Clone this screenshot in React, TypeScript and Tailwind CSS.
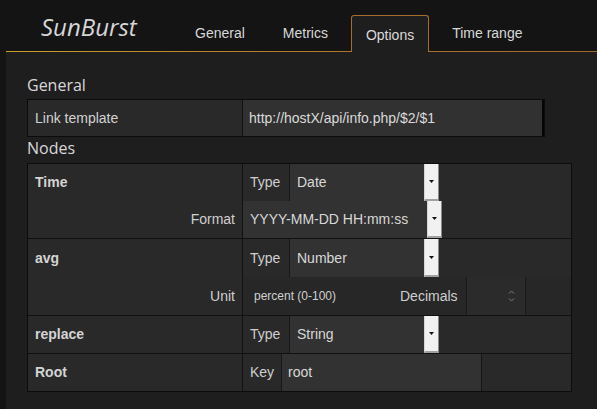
import React from 'react';

const sans = { fontFamily: '"Liberation Sans", Arial, sans-serif' };
const open = { fontFamily: '"Open Sans", "Noto Sans", sans-serif' };

const tabs = ['General', 'Metrics', 'Options', 'Time range'];

function Arrow() {
  return (
    <div className="w-[15px] h-full shrink-0 bg-[#f1f1f1] border-l border-l-[#d6d6d6] border-r border-r-[#8a8a8a] border-b-2 border-b-[#a0a0a0] flex items-center justify-center">
      <svg width="5" height="3" viewBox="0 0 5 3">
        <path d="M0 0h5L2.5 3z" fill="#111" />
      </svg>
    </div>
  );
}

function Select({ value, className }: { value: string; className: string }) {
  return (
    <div className={`h-full flex bg-[#323232] ${className}`}>
      <div className="flex-1 flex items-center pl-[7px] text-[#d8d8d8]">{value}</div>
      <Arrow />
    </div>
  );
}

function Label({ text, className }: { text: string; className: string }) {
  return (
    <div className={`h-full flex items-center pl-[7px] border-r border-[#181818] text-[#cfcfcf] ${className}`}>
      {text}
    </div>
  );
}

function NameCell({ name }: { name: string }) {
  return <div className="h-[37px] flex items-center pl-[7px] font-bold text-[#d4d4d4]">{name}</div>;
}

export default function App() {
  return (
    <div className="w-[597px] h-[409px] bg-[#141414] flex flex-col overflow-hidden text-[14px]" style={sans}>
      {/* header with title and tabs */}
      <header className="h-[51px] shrink-0 flex items-end pl-[41px]">
        <div className="w-[139px] h-full flex items-center pt-[3px] italic text-[24px] text-[#d6d6d6]" style={open}>
          SunBurst
        </div>
        <nav className="flex gap-[8px]">
          {tabs.map((t) =>
            t === 'Options' ? (
              <div
                key={t}
                className="relative z-10 -mb-px h-[37px] px-[14px] pt-[3px] flex items-center bg-[#1f1e1f] border border-b-0 border-[#a86d2b] rounded-t-[3px] text-[#dadada]"
              >
                {t}
              </div>
            ) : (
              <div key={t} className="h-[36px] px-[15px] flex items-center text-[#d8d8d8]">
                {t}
              </div>
            ),
          )}
        </nav>
      </header>

      <div className="flex-1 ml-[6px] flex flex-col">
        <div className="h-px bg-linear-to-r from-[#c9a12b] via-[#b07a2b] to-[#a8672b]" />
        <main className="flex-1 bg-[#1f1e1f] pl-[21px] pt-[19px]">
          <div className="h-[28px] flex items-center text-[16px] text-[#d8d8d8]" style={open}>
            General
          </div>
          <div className="w-[518px] h-[38px] flex border border-[#0b0b0b] bg-[#292929]">
            <div className="w-[215px] border-r border-[#111] flex items-center pl-[7px] text-[#d2d2d2]">Link template</div>
            <div className="flex-1 bg-[#313131] border-r-2 border-[#050505] flex items-center pl-[6px] text-[#dadada]">
              http://hostX/api/info.php/$2/$1
            </div>
          </div>
          <div className="h-[26px] flex items-center pb-[4px] text-[16px] text-[#d8d8d8]" style={open}>
            Nodes
          </div>

          {/* nodes table */}
          <div className="w-[545px] border border-[#0c0c0c] bg-[#292929]">
            {/* Time */}
            <div className="flex border-b border-[#111]">
              <div className="w-[215px] border-r border-[#111] flex flex-col">
                <NameCell name="Time" />
                <div className="h-[37px] flex items-center justify-end pr-[7px] text-[#cfcfcf]">Format</div>
              </div>
              <div className="flex-1 flex flex-col">
                <div className="h-[37px] flex">
                  <Label text="Type" className="w-[47px]" />
                  <Select value="Date" className="w-[149px]" />
                </div>
                <div className="h-[37px] flex">
                  <Select value="YYYY-MM-DD HH:mm:ss" className="w-[199px]" />
                </div>
              </div>
            </div>

            {/* avg */}
            <div className="flex border-b border-[#111]">
              <div className="w-[215px] border-r border-[#111] flex flex-col">
                <div className="h-[38px] flex items-center pl-[7px] font-bold text-[#d4d4d4]">avg</div>
                <div className="h-[38px] flex items-center justify-end pr-[7px] text-[#cfcfcf]">Unit</div>
              </div>
              <div className="flex-1 flex flex-col">
                <div className="h-[38px] flex">
                  <Label text="Type" className="w-[47px]" />
                  <Select value="Number" className="w-[149px]" />
                </div>
                <div className="h-[38px] flex bg-[#272727]">
                  <div className="w-[157px] flex items-center pl-[11px] text-[12px] text-[#d0d0d0]">percent (0-100)</div>
                  <div className="flex items-center pr-[8px] text-[#cfcfcf]">Decimals</div>
                  <div className="w-[60px] border-x border-[#1a1a1a] bg-[#2b2b2b] flex items-center justify-end pr-[10px]">
                    <svg width="7" height="14" viewBox="0 0 7 14">
                      <path d="M1 4.5L3.5 2L6 4.5M1 9.5L3.5 12L6 9.5" fill="none" stroke="#7a7a7a" strokeWidth="1" />
                    </svg>
                  </div>
                </div>
              </div>
            </div>

            {/* replace */}
            <div className="flex border-b border-[#111]">
              <div className="w-[215px] border-r border-[#111]">
                <NameCell name="replace" />
              </div>
              <div className="flex-1 h-[37px] flex">
                <Label text="Type" className="w-[47px]" />
                <Select value="String" className="w-[149px]" />
              </div>
            </div>

            {/* Root */}
            <div className="flex">
              <div className="w-[215px] border-r border-[#111]">
                <NameCell name="Root" />
              </div>
              <div className="flex-1 h-[37px] flex">
                <Label text="Key" className="w-[39px]" />
                <div className="w-[200px] h-full bg-[#323232] border-r border-[#151515] flex items-center pl-[6px] text-[#d8d8d8]">
                  root
                </div>
              </div>
            </div>
          </div>
        </main>
      </div>
    </div>
  );
}
